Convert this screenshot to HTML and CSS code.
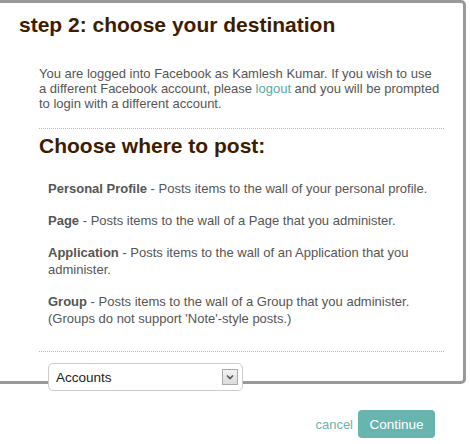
FILE: index.html
```html
<!DOCTYPE html>
<html>
<head>
<meta charset="utf-8">
<link rel="stylesheet" href="styles.css">
</head>
<body>
<div class="dialog">
  <div class="panel">
    <h1 class="step-title">step 2: choose your destination</h1>
    <div class="panel-body">
      <p class="intro">You are logged into Facebook as Kamlesh Kumar. If you wish to use a different Facebook account, please <a class="link" href="#">logout</a> and you will be prompted to login with a different account.</p>
      <div class="sep"></div>
      <h2 class="section-title">Choose where to post:</h2>
      <ul class="targets">
        <li><b>Personal Profile</b> - Posts items to the wall of your personal profile.</li>
        <li><b>Page</b> - Posts items to the wall of a Page that you administer.</li>
        <li><b>Application</b> - Posts items to the wall of an Application that you administer.</li>
        <li><b>Group</b> - Posts items to the wall of a Group that you administer.<br>(Groups do not support 'Note'-style posts.)</li>
      </ul>
      <div class="sep sep-bottom"></div>
      <div class="select">
        <span class="select-text">Accounts</span>
        <span class="select-btn">
          <svg width="8" height="6" viewBox="0 0 8 6"><path d="M1 1.5 L4 4.5 L7 1.5" fill="none" stroke="#555" stroke-width="1.6"/></svg>
        </span>
      </div>
    </div>
  </div>
  <div class="actions">
    <a class="cancel" href="#">cancel</a>
    <button class="continue">Continue</button>
  </div>
</div>
</body>
</html>
```
FILE: styles.css
```css
html, body {
  margin: 0;
  padding: 0;
  background: #fff;
}
body {
  font-family: "Liberation Sans", Arial, sans-serif;
  font-size: 13px;
  color: #555;
}
.dialog {
  width: 466px;
}
.panel {
  border: 3px solid #999;
  border-left: none;
  border-radius: 0 5px 5px 0;
  background: #fff;
}
.step-title {
  margin: 0;
  padding: 10px 0 0 19px;
  font-size: 21px;
  line-height: 24px;
  font-weight: bold;
  color: #3d1d00;
}
.panel-body {
  padding: 0 19px 0 39px;
}
.intro {
  margin: 29px 0 0 0;
  padding-right: 4px;
  line-height: 15px;
}
.link {
  color: #5aa9a3;
  text-decoration: none;
}
.sep {
  border-top: 1px dotted #bbb;
  margin-top: 17px;
}
.section-title {
  margin: 5px 0 0 0;
  font-size: 21px;
  line-height: 24px;
  font-weight: bold;
  color: #3d1d00;
}
.targets {
  list-style: none;
  margin: 22px 0 0 0;
  padding: 0 0 0 9px;
}
.targets li {
  line-height: 17px;
  margin-bottom: 15px;
}
.targets li:last-child {
  margin-bottom: 0;
}
.targets b {
  color: #555;
}
.sep-bottom {
  margin-top: 24px;
}
.select {
  display: flex;
  align-items: center;
  justify-content: space-between;
  box-sizing: border-box;
  width: 195px;
  height: 28px;
  margin: 11px 0 -10px 9px;
  padding: 0 4px 0 7px;
  border: 1px solid #ccc;
  border-radius: 5px;
  background: #fff;
  color: #222;
  font-size: 13.5px;
  position: relative;
}
.select-btn {
  display: flex;
  align-items: center;
  justify-content: center;
  box-sizing: border-box;
  width: 16px;
  height: 16px;
  border: 1px solid #aaa;
  background: linear-gradient(#f2f2f2, #dcdcdc);
}
.actions {
  display: flex;
  justify-content: flex-end;
  align-items: center;
  gap: 5px;
  margin-top: 26px;
  padding-right: 31px;
}
.cancel {
  color: #6ab3ad;
  text-decoration: none;
  font-size: 13px;
}
.continue {
  width: 77px;
  height: 28px;
  border: none;
  border-radius: 4px;
  background: #68b4ae;
  color: #fff;
  font-family: "Liberation Sans", Arial, sans-serif;
  font-size: 13.5px;
  padding: 0;
}
```
